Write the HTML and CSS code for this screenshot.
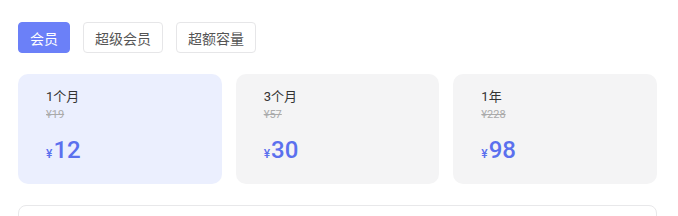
FILE: index.html
```html
<!DOCTYPE html>
<html lang="zh-CN">
<head>
    <meta charset="UTF-8">
    <meta name="viewport" content="width=device-width, initial-scale=1.0">
    <title>会员套餐</title>
    <link rel="stylesheet" href="styles.css">
</head>
<body>
    <div class="contenedor">
        <div class="pestanas">
            <button class="pestana activa">会员</button>
            <button class="pestana">超级会员</button>
            <button class="pestana">超额容量</button>
        </div>

        <div class="planes">
            <div class="plan seleccionado">
                <div class="plan-nombre">1个月</div>
                <div class="plan-original">¥19</div>
                <div class="plan-precio"><span class="moneda">¥</span>12</div>
            </div>
            <div class="plan">
                <div class="plan-nombre">3个月</div>
                <div class="plan-original">¥57</div>
                <div class="plan-precio"><span class="moneda">¥</span>30</div>
            </div>
            <div class="plan">
                <div class="plan-nombre">1年</div>
                <div class="plan-original">¥228</div>
                <div class="plan-precio"><span class="moneda">¥</span>98</div>
            </div>
        </div>

        <div class="detalle"></div>
    </div>
</body>
</html>
```

FILE: styles.css
```css
* {
    box-sizing: border-box;
}

body {
    margin: 0;
    background-color: #ffffff;
    font-family: Roboto, "Noto Sans CJK SC", sans-serif;
    color: #333;
    overflow: hidden;
}

.contenedor {
    width: 639px;
    margin-left: 18px;
    padding-top: 22px;
}

.pestanas {
    display: flex;
    gap: 13px;
}

.pestana {
    height: 31px;
    padding: 0 11px;
    font-family: inherit;
    font-size: 14px;
    color: #555;
    background-color: #fff;
    border: 1px solid #e6e6e8;
    border-radius: 4px;
    cursor: pointer;
}

.pestana.activa {
    background-color: #6b80f8;
    border-color: #6b80f8;
    color: #fff;
}

.planes {
    display: grid;
    grid-template-columns: repeat(3, 1fr);
    gap: 14px;
    margin-top: 21px;
}

.plan {
    height: 110px;
    padding: 14px 28px 0;
    background-color: #f4f4f5;
    border-radius: 10px;
}

.plan.seleccionado {
    background-color: #ebeffe;
}

.plan-nombre {
    font-size: 13px;
    line-height: 18px;
    color: #333;
}

.plan-original {
    font-size: 11px;
    line-height: 14px;
    margin-top: 2px;
    color: #aaa;
    text-decoration: line-through;
}

.plan-precio {
    margin-top: 14px;
    font-size: 24px;
    line-height: 28px;
    font-weight: 500;
    color: #5b70ee;
}

.moneda {
    font-size: 12px;
    margin-right: 1px;
}

.detalle {
    height: 40px;
    margin-top: 21px;
    border: 1px solid #e8e8ea;
    border-radius: 8px;
}
```
